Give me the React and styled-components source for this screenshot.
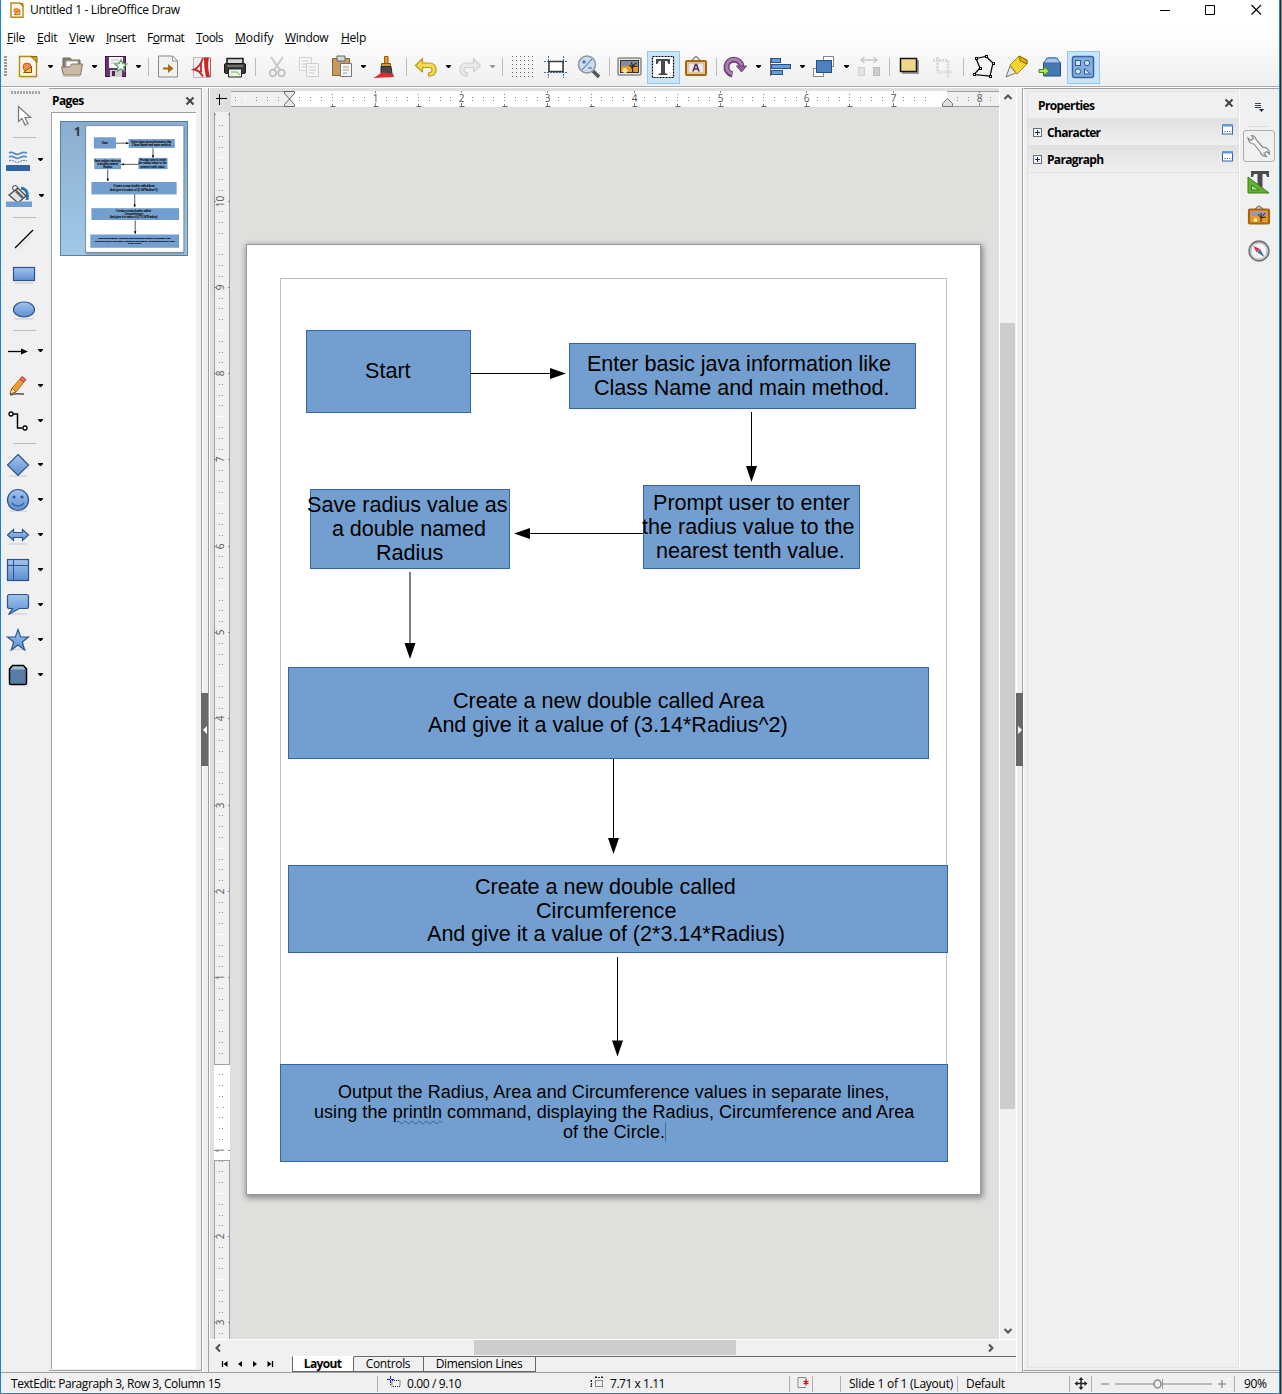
import React, { useLayoutEffect, useRef } from 'react';
import styled, { createGlobalStyle, css } from 'styled-components';

const Global = createGlobalStyle`
  * { box-sizing: border-box; }
  body { margin: 0; background: #fff; font-family: "Open Sans", "Noto Sans", sans-serif; font-size: 12px; color: #000; }
`;

/* ---------- text ---------- */

const Text = styled.span`
  display: inline-block;
  flex: none;
  white-space: pre;
  font-size: ${(p) => p.$size || 12}px;
  font-weight: ${(p) => (p.$bold ? 700 : 400)};
  line-height: ${(p) => p.$lh || 16}px;
  margin-left: ${(p) => p.$ml || 0}px;
`;

/* Tracks its characters so that the label fills a given width. */
function Label({ w, children, ...rest }) {
  const ref = useRef(null);
  useLayoutEffect(() => {
    const el = ref.current;
    el.style.letterSpacing = '0px';
    el.style.letterSpacing = `${((w - el.offsetWidth) / el.textContent.length).toFixed(3)}px`;
  }, [w]);
  return <Text ref={ref} {...rest}>{children}</Text>;
}

/* ---------- window frame ---------- */

const Frame = styled.div`
  display: flex;
  width: 1282px;
  height: 1394px;
  overflow: hidden;
`;
const Window = styled.div`
  display: flex;
  flex-direction: column;
  width: 1280px;
  height: 1394px;
  border-left: 1px solid #1883d7;
  border-right: 1px solid #1883d7;
  border-bottom: 1px solid #1883d7;
  background: #f0f0f0;
`;
const Edge = styled.div`
  width: 2px;
  background: linear-gradient(90deg, #26282c 50%, #8b8b8b 50%);
`;
const Header = styled.header`
  height: 88px;
  flex: none;
  background: linear-gradient(#fff 0, #fff 20px, #fdfdfd 40px, #efefef 86px);
  border-bottom: 1px solid #fff;
  box-shadow: inset 0 -1px 0 #a8a8a8;
`;
const TitleBar = styled.div`
  display: flex;
  height: 20px;
  padding-left: 8px;
  align-items: center;
`;
const WindowButtons = styled.div`
  display: flex;
  gap: 35px;
  margin-left: auto;
  padding-right: 17px;
`;
const MenuBar = styled.nav`
  display: flex;
  height: 28px;
  padding: 10px 0 0 6px;
`;
const ToolRow = styled.div`
  display: flex;
  align-items: center;
  height: 38px;
`;
const Slot = styled.div`
  display: flex;
  flex: none;
  align-items: center;
  justify-content: center;
  width: ${(p) => p.$w}px;
  height: ${(p) => p.$h || 33}px;
  margin-left: ${(p) => p.$gap}px;
  ${(p) => p.$on && css`background: #cce4f7; border: 1px solid #90c8f6;`}
`;
const Divider = styled.i`
  width: 1px;
  height: 18px;
  background: #bcbcbc;
`;
const Drawing = styled.svg`
  display: block;
  flex: none;
  overflow: visible;
`;
const I = ({ children, s = 24 }) => (
  <Drawing width={s} height={s} viewBox={`${-s / 2} ${-s / 2} ${s} ${s}`} fill="none">{children}</Drawing>
);
const Caret = ({ c = '#000' }) => <I s={8}><path d="M-2 -2h5v1l-2 2h-1l-2-2z" fill={c} /></I>;

/* ---------- toolbar icons ---------- */

const New = () => <I><path d="M-8.5 -10.5h13l4 4v16h-17z" fill="#fdf7ec" stroke="#b08c1c" strokeWidth="1.4" /><path d="M3 -10.5h6v6z" fill="#c9a227" stroke="#8a6c0c" /><path d="M-7 10.8h15" stroke="#ccc" /><circle cx="-1" cy="0" r="4" fill="#f28b4b" stroke="#b5602a" /><path d="M-4.5 5.5l8-6v6z" fill="#f4c94e" stroke="#8a4a12" /></I>;
const Folder = () => <I><path d="M-9 4v-13h7l2 2h8v11z" fill="#8b7d6c" stroke="#776a5a" /><path d="M-6 -6h12v6h-12z" fill="#fff" stroke="#aaa" /><path d="M-10.5 0h8l2-3h11l-2 11h-17z" fill="#cbbba5" stroke="#84755f" /><path d="M-9 9.5h17" stroke="#ccc" /></I>;
const Save = () => <I><rect x="-10.5" y="-10.5" width="20" height="20" fill="#67356f" stroke="#40194a" /><path d="M-7 -10h14v11h-14z" fill="#f6f6f6" /><path d="M-5 -7h8M-5 -4h8" stroke="#bbb" /><path d="M-6 3h12v7h-12z" fill="#cfcfcf" /><path d="M-4 4h3v5h-3z" fill="#453049" /><path d="M5 -7l1.8 3.6 4 .4-3 3 .8 4-3.6-2-3.6 2 .6-4-3-3 4-.4z" fill="#fff" stroke="#55a868" strokeWidth="1.3" /></I>;
const Export = () => <I><path d="M-9.5 -11h14l5 5v16h-19z" fill="#f1f1f1" stroke="#888" /><path d="M4.500 -11v5h5z" fill="#fff" stroke="#999" /><path d="M-5 1.5h6" stroke="#a76c0e" strokeWidth="2" /><path d="M0 -3l5.5 4.5-5.5 4.5z" fill="#a76c0e" /></I>;
const Pdf = () => <I><path d="M-8.5 -9.5h17v20h-17z" fill="#efefef" stroke="#bbb" /><path d="M8.500 -9v19" stroke="#d05055" /><path d="M2 -9.500h5c-1.500 6-1 13 1 19.500h-4c-1.500-7-2-13-2-19.500z" fill="#c9252b" /><path d="M1 -9C-1 -3 -4 1 -8 2.500C-5 3 -1 6 1 9.500M-1 -4v9" stroke="#c9252b" strokeWidth="1.800" /></I>;
const Print = () => <I><path d="M-8 -8.5h16v6h-16z" fill="#d5d5d5" stroke="#222" strokeWidth="1.6" /><rect x="-10.5" y="-3.5" width="21" height="10" rx="1.5" fill="#383838" stroke="#181818" /><path d="M-8 -1h16" stroke="#a9a9a9" /><path d="M-6.5 2h13v8h-13z" fill="#eaf6e6" stroke="#222" /><path d="M-4 5h6l3 3" stroke="#71b064" /></I>;
const Cut = () => <I><path d="M-6 -10L3 3M6 -10L-3 3" stroke="#cacaca" strokeWidth="2" /><circle cx="-4" cy="6" r="3.3" stroke="#bcbcbc" strokeWidth="1.7" /><circle cx="4.5" cy="6" r="3.3" stroke="#bcbcbc" strokeWidth="1.7" /></I>;
const Copy = () => <I><path d="M-9.5 -9.5h12v13h-12z" fill="#f6f6f6" stroke="#d2d2d2" /><path d="M-7 -6h7M-7 -3h7M-7 0h5" stroke="#ccc" /><path d="M-2.5 -3.5h12v13h-12z" fill="#f6f6f6" stroke="#cdcdcd" /><path d="M0 0h7M0 3h7M0 6h5" stroke="#ccc" /></I>;
const Paste = () => <I><path d="M-8.5 -8.5h17v17h-17z" fill="#c69a63" stroke="#8d642c" /><path d="M-4 -11h8v5h-8z" fill="#d8d8d8" stroke="#666" /><path d="M-.5 -3.5h11v13h-11z" fill="#f7f7f5" stroke="#777" /><path d="M2 0h6M2 3h6M2 6h4" stroke="#9a9a9a" /></I>;
const Brush = () => <I><path d="M-1.5 -10.5h3.5v7h-3.5z" fill="#e39a3b" stroke="#9b5c12" /><path d="M-4.5 -3.5h9v3h-9z" fill="#d79539" stroke="#8a5716" /><path d="M-5 -.5h10l1 7h-11z" fill="#48484c" stroke="#2b2b2b" /><path d="M-13 11c4-1 6-4.500 9-5.500l11 1 1 3.500z" fill="#dd2a33" /></I>;
const Undo = ({ f = '#f4dc54', s = '#b79a12', flip }) => <I><path transform={flip ? 'scale(-1,1)' : undefined} d="M-10.5 -1.5l7-7v4.500h7c8 0 9 12.500 1 13h-2v-3c4 0 5 -5.500 1-5.500h-7v4.500z" fill={f} stroke={s} strokeWidth="1.2" strokeLinejoin="round" /></I>;
const GridDots = () => <I>{[-11, -7, -3, 1, 5, 9].map((y) => <path key={y} d={`M-10 ${y + 0.5}h21`} stroke="#666" strokeDasharray="1 3" />)}</I>;
const Guides = () => <I><path d="M-7.5 -11v22M7.5 -11v22M-12 -5.5h24M-12 5.5h24" stroke="#3b6f9e" strokeDasharray="2 1" /><rect x="-7" y="-5.5" width="14" height="10" fill="#fff" stroke="#3c3c3c" strokeWidth="1.5" /></I>;
const Zoom = () => <I><path d="M4 4l6 6" stroke="#555" strokeWidth="3.5" /><circle cx="-2" cy="-2.5" r="8.5" fill="#cbdcf0" stroke="#8d9297" strokeWidth="1.5" /><path d="M-7 3L3 -8M-7 -5h4M-5 -7v4M-1 1h4" stroke="#3b669c" /></I>;
const Picture = ({ frame = '#8b8b85' }) => <><rect x="-11" y="-9" width="23" height="17" rx="1" fill="#e7e7e2" stroke={frame} strokeWidth="1.5" /><rect x="-8.500" y="-6.5" width="18" height="12" fill="#e8982c" stroke="#333" /><path d="M-8 -6h17v5c-6-1-10 1-17 0z" fill="#7d8ea0" /><circle cx="-4" cy="3.500" r="2.5" fill="#ffe88d" /><path d="M3.500 5c1-4-1-5-3-7M3.500 1c0-3 2-4 4-5M3.500 0l-1-5M3.500 0l5-1" stroke="#37200f" strokeWidth="1.2" /></>;
const TextTool = () => <I><rect x="-10.5" y="-10.5" width="21" height="21" fill="#fff" stroke="#000" strokeDasharray="2 1" strokeWidth="1.2" /><path d="M-7 -8h14v5h-1.500l-1.500-3h-2v12l2.500 1v1h-9v-1l2.500-1v-12h-2l-1.500 3h-1.500z" fill="#464b4e" /></I>;
const Fontwork = () => <I><path d="M-4 -7l4-3.5 4 3.5" stroke="#888" strokeWidth="1.4" /><rect x="-10" y="-6" width="20" height="14" rx="1" fill="#eee8f2" stroke="#a4660b" strokeWidth="2" /><rect x="-8" y="-4" width="16" height="10" stroke="#d7a24c" /><path d="M-3 4.500l2.500-7h1l2.500 7M-1.800 2h3.600" stroke="#54375e" strokeWidth="1.7" /></I>;
const Rotate = () => <I><path d="M-2.5 7.500A7.5 7.5 0 1 1 6.5 0" stroke="#6e3f75" strokeWidth="6" /><path d="M-2.5 7A7.5 7.5 0 1 1 6.5 0" stroke="#a880ae" strokeWidth="3" /><path d="M1.5 -1h10l-5 6z" fill="#8f6096" stroke="#6e3f75" /></I>;
const bar = { fill: '#6c9bd6', stroke: '#24508c' };
const Align = () => <I><path d="M-9.5 -9v18" stroke="#666" /><rect x="-8.5" y="-8.5" width="9" height="4" {...bar} /><rect x="-8.5" y="-2.5" width="19" height="4" {...bar} /><rect x="-8.5" y="3.5" width="11" height="4" {...bar} /></I>;
const Arrange = () => <I><rect x="-.5" y="-10.5" width="10" height="10" fill="#fff" stroke="#888" /><rect x="-10.5" y="1.5" width="10" height="8" fill="#fff" stroke="#888" /><rect x="-7.5" y="-6.5" width="15" height="12" fill="#4c80bf" stroke="#244f87" /></I>;
const Distribute = () => <I><path d="M-7 -7h14M-4.5 -10l-3.5 3 3.5 3M4.5 -10l3.5 3-3.5 3" stroke="#c8c8c8" strokeWidth="1.5" /><rect x="-10.5" y=".5" width="6" height="8" fill="#e3e3e3" stroke="#cfcfcf" /><rect x="4.5" y=".5" width="6" height="8" fill="#ccc" stroke="#bdbdbd" /></I>;
const Shadow = () => <I><rect x="-7" y="-7" width="17" height="14" fill="#9a9a9a" /><rect x="-8.5" y="-8.5" width="16" height="13" fill="#f0d68c" stroke="#141414" strokeWidth="1.5" /></I>;
const Crop = () => <I><path d="M-5.500 -10v15h15M-10 -6.500h15v17" stroke="#dadada" strokeWidth="3" strokeDasharray="2 1" /></I>;
const Points = () => <I><path d="M-7 -8.5l10-2 7 6.500-3 13-16-1.500 6-6.500z" stroke="#000" strokeWidth="1.2" />{[[-7, -9], [3, -11], [10, -4], [7, 9], [-9, 7], [-3, 1]].map(([x, y]) => <rect key={x} x={x - 0.5} y={y - 0.5} width="2" height="2" fill="#fff" stroke="#000" />)}</I>;
const Glue = () => <I><path d="M-11 10l4-11 6 7z" fill="#e8e8e4" stroke="#777" /><path d="M-7 -2l9-9 8 4v4l-10 10z" fill="#f4d62f" stroke="#a98b0b" /><path d="M2 -11l8 4v4l-7-3z" fill="#dca915" stroke="#8f7009" /></I>;
const Extrude = () => <I><path d="M-6.5 -4l4-5h9l4 5v13h-17z" fill="#4678b4" stroke="#234e82" /><path d="M-6.500 -4l4-5h9l4 5z" fill="#a9c6e8" stroke="#3b6ca8" /><path d="M-11 2.5h5v-3l5 4.500-5 4.500v-3h-5z" fill="#b5e853" stroke="#3f8b13" /></I>;
const Shapes = () => <I><rect x="-10.5" y="-10.5" width="21" height="21" rx="2" fill="#85ade0" stroke="#3564a0" strokeWidth="1.5" /><g fill="#d3e3f6" stroke="#2b5793"><rect x="-7.5" y="-6.5" width="5" height="5" /><circle cx="4" cy="-4" r="2.7" /><circle cx="-5" cy="4.5" r="2.7" /><path d="M1.5 1.5v5.5h6z" /></g></I>;
const Grip = () => <I>{[-10, -7, -4, -1, 2, 5, 8].map((y) => <path key={y} d={`M-1 ${y}h3`} stroke="#999" strokeWidth="2" />)}</I>;

const TOOLS = [
  [5, Grip, 6], [28, New], [50, 'v'], [72, Folder], [94, 'v'], [116, Save], [138, 'v'], [148, '|'],
  [168, Export], [202, Pdf], [235, Print], [255, '|'], [277, Cut], [309, Copy], [341, Paste], [363, 'v'], [386, Brush], [406, '|'],
  [426, Undo], [448, 'v'], [470, () => <Undo flip f="#e9e9e9" s="#cfcfcf" />], [492, 'x'], [502, '|'],
  [522, GridDots], [556, Guides], [589, Zoom], [609, '|'],
  [629, () => <I><Picture /></I>], [663, TextTool, 33, true], [696, Fontwork], [716, '|'],
  [735, Rotate], [758, 'v'], [780, Align], [802, 'v'], [824, Arrange], [846, 'v'], [869, Distribute], [889, '|'],
  [909, Shadow], [943, Crop], [963, '|'], [983, Points], [1017, Glue], [1050, Extrude], [1083, Shapes, 33, true],
];

function Tools() {
  let end = 1;
  return (
    <ToolRow>
      {TOOLS.map(([at, Icon, width, on]) => {
        const w = width || (typeof Icon === 'string' ? 8 : 24);
        const gap = at - w / 2 - end;
        end = at + w / 2;
        return (
          <Slot key={at} $w={w} $gap={gap} $on={on}>
            {Icon === '|' ? <Divider /> : Icon === 'v' ? <Caret /> : Icon === 'x' ? <Caret c="#999" /> : <Icon />}
          </Slot>
        );
      })}
    </ToolRow>
  );
}

const MENUS = [['File', 0, 6, 18], ['Edit', 0, 12, 20], ['View', 0, 12, 25], ['Insert', 0, 12, 29], ['Format', 1, 12, 37], ['Tools', 0, 12, 27], ['Modify', 0, 12, 38], ['Window', 0, 12, 43], ['Help', 0, 13, 25]];

const MenuItem = styled.div`
  display: flex;
  flex: none;
  width: ${(p) => p.$w}px;
  margin-left: ${(p) => p.$gap}px;
`;

/* ---------- body ---------- */

const Body = styled.div`
  display: flex;
  height: 1284px;
  flex: none;
`;

const ToolBox = styled.aside`
  display: flex;
  flex-direction: column;
  width: 48px;
  flex: none;
`;
const BoxRow = styled.div`
  display: flex;
  flex: none;
  align-items: center;
  height: ${(p) => p.$h}px;
  margin-top: ${(p) => p.$gap}px;
  padding-left: ${(p) => p.$x}px;
  gap: 6px;
`;
const BoxRule = styled.i`
  width: 23px;
  height: 1px;
  background: #bdbdbd;
`;

const Blue = () => (
  <defs>
    <linearGradient id="blue" x1="0" y1="0" x2="0" y2="1">
      <stop offset="0" stopColor="#a5c4ec" />
      <stop offset="1" stopColor="#5c8fd0" />
    </linearGradient>
  </defs>
);
const shape = { fill: 'url(#blue)', stroke: '#2a5491', strokeWidth: 1.2 };
const Base = ({ y = 11 }) => <path d={`M-9 ${y}h18`} stroke="#d6d6d6" strokeWidth="1.5" />;
const DotGrip = () => <I>{[-14, -11, -8, -5, -2, 1, 4, 7, 10, 13].map((x) => <rect key={x} x={x} y="-1" width="2" height="3" fill="#a6a6a6" />)}</I>;
const Pointer = () => <I><path d="M-5.5 -10.5v15l3.5-3 3 6.5 3-1.5-3-6h5.5z" fill="#fff" stroke="#777" strokeWidth="1.2" /></I>;
const LineColor = () => <I><path d="M-9 -7c4-3 6 3 10 1s5-2 8-1M-9 -3c4-3 6 3 10 1s5-2 8-1" stroke="#5b8ac4" strokeWidth="1.7" /><path d="M-9 1c4-3 6 3 10 1s5-2 8-1" stroke="#3f73b3" strokeDasharray="2 1" /><path d="M-12 5h24v6h-24z" fill="#2f62a6" /></I>;
const Fill = () => <I><path d="M2 -8c7 1 7 8 6 12" stroke="#2b78b5" strokeWidth="3" /><path d="M-10 -1l9-7 8 8-8 7z" fill="#e2e2e2" stroke="#444" strokeWidth="1.2" /><path d="M-3 -5l7 7" stroke="#666" strokeWidth="2.500" /><circle cx="-4" cy="-8" r="2.5" stroke="#444" /><path d="M-13 5.5h26v5.5h-26z" fill="#729fcf" /></I>;
const Line = () => <I><path d="M-7 11l16-16" stroke="#ddd" /><path d="M-9 9l18-18" stroke="#000" strokeWidth="1.2" /></I>;
const Rect = () => <I><Blue /><rect x="-10.5" y="-6.5" width="21" height="13" {...shape} /><Base y={9} /></I>;
const Ellipse = () => <I><ellipse cx="0" cy="-.5" rx="10.5" ry="7.5" {...shape} /><Base y={9} /></I>;
const Arrow = () => <I><path d="M-10 .5h14" stroke="#000" strokeWidth="1.3" /><path d="M3 -2.5l7 3-7 3z" fill="#000" /></I>;
const Pencil = () => <I><path d="M-8 9c6-2 10-1 14-1" stroke="#555" strokeWidth="1.500" /><path d="M-8 8l2-6 8-9 4 3-8 10z" fill="#ee9b33" stroke="#b5701a" /><path d="M-8 8l2-6 4 4z" fill="#f3dfb8" stroke="#96680d" /><path d="M2 -7l2-2.500 4 3-2 2.500z" fill="#e97373" stroke="#b33" /></I>;
const Connector = () => <I><path d="M-5 -7h4.5v14h5" stroke="#000" strokeWidth="1.500" /><circle cx="-7" cy="-7" r="2" fill="#fff" stroke="#000" strokeWidth="1.300" /><circle cx="7" cy="7" r="2" fill="#fff" stroke="#000" strokeWidth="1.300" /></I>;
const Diamond = () => <I><Base /><path d="M0 -10.5l10.5 10.5-10.5 10.5-10.5-10.5z" {...shape} /></I>;
const Smile = () => <I><Base /><circle r="10.5" {...shape} /><circle cx="-4" cy="-3" r="1.5" fill="#2a5491" /><circle cx="4" cy="-3" r="1.5" fill="#2a5491" /><path d="M-6 3c3 4 9 4 12 0" stroke="#2a5491" strokeWidth="1.2" /></I>;
const DoubleArrow = () => <I><Base y={9} /><path d="M-10.5 0l6-5.5v3h9v-3l6 5.5-6 5.5v-3h-9v3z" {...shape} /></I>;
const Flow = () => <I><rect x="-10.5" y="-10.5" width="21" height="21" {...shape} /><path d="M-4.500 -10v20M-10 -4.5h20" stroke="#2a5491" /></I>;
const Callout = () => <I><Base y={9} /><path d="M-8.5 -10.5h17q2 0 2 2v10q0 2-2 2h-7l-11 6 4-6h-3q-2 0-2-2v-10q0-2 2-2z" {...shape} /></I>;
const Star = () => <I><Base y={9.5} /><path d="M0 -10.5l2.6 7.5h7.9l-6.2 5 2.3 8-6.6-5-6.6 5 2.3-8-6.2-5h7.9z" {...shape} /></I>;
const Cube = () => <I><path d="M-8.5 -6l3-3.5h11l3 3.5v14q0 1.500-1.500 1.500h-14q-1.500 0-1.500-1.500z" fill="#587ca4" stroke="#000" strokeWidth="1.500" /><path d="M-7.500 -5.500l2.500-3h10l2.500 3z" fill="#a3bad1" /></I>;

const BOX = [
  [92, DotGrip, 12, false, 4], [117, Pointer, 11], [137, null], [160, LineColor, 5, true], [196, Fill, 6, true], [217, null],
  [239, Line, 11], [274, Rect, 11], [310, Ellipse, 11], [330, null],
  [351, Arrow, 5, true], [386, Pencil, 5, true], [421, Connector, 5, true], [443, null],
  [464.5, Diamond, 5, true], [500, Smile, 5, true], [535, DoubleArrow, 5, true], [570, Flow, 5, true],
  [605, Callout, 5, true], [640, Star, 5, true], [675, Cube, 5, true],
];

function Shelf() {
  let end = 88;
  return (
    <ToolBox>
      {BOX.map(([at, Icon, x, caret, height]) => {
        const h = height || (Icon ? 24 : 2);
        const gap = at - h / 2 - end;
        end = at + h / 2;
        return (
          <BoxRow key={at} $h={h} $gap={gap} $x={Icon ? x : 12}>
            {Icon ? <Icon /> : <BoxRule />}
            {caret && <Caret />}
          </BoxRow>
        );
      })}
    </ToolBox>
  );
}

/* ---------- diagram ---------- */

const Misspelt = styled.span`
  text-decoration: underline wavy #2c5f97 1px;
  text-underline-offset: 2px;
`;

const NODES = [
  { x: 306, y: 330, w: 165, h: 83, top: 359, lines: [['Start', 365, 46]] },
  { x: 569, y: 343, w: 347, h: 66, top: 352, lines: [['Enter basic java information like', 587, 304], ['Class Name and main method.', 594, 295]] },
  { x: 643, y: 485, w: 217, h: 84, top: 491, lines: [['Prompt user to enter', 653, 197], ['the radius value to the', 642, 212], ['nearest tenth value.', 656, 189]] },
  { x: 310, y: 489, w: 200, h: 80, top: 493, lines: [['Save radius value as', 307, 200], ['a double named', 332, 154], ['Radius', 376, 67]] },
  { x: 288, y: 667, w: 641, h: 92, top: 689, lines: [['Create a new double called Area', 453, 311], ['And give it a value of (3.14*Radius^2)', 428, 360]] },
  { x: 288, y: 865, w: 660, h: 88, top: 875, lh: 23.5, lines: [['Create a new double called', 475, 261], ['Circumference', 536, 140], ['And give it a value of (2*3.14*Radius)', 427, 358]] },
  { x: 280, y: 1064, w: 668, h: 98, top: 1082, lh: 20, size: 18, lines: [['Output the Radius, Area and Circumference values in separate lines,', 338, 551], [<>using the <Misspelt>println</Misspelt> command, displaying the Radius, Circumference and Area</>, 314, 600], ['of the Circle.', 563, 102]] },
];

const Sheet = styled.div`
  position: absolute;
  left: ${(p) => p.$x}px;
  top: ${(p) => p.$y}px;
  width: 735px;
  height: 951px;
  border: 1px solid #9a9a9a;
  background: #fff;
  box-shadow: 1px 2px 6px 1px rgba(0, 0, 0, 0.4);
  ${(p) => p.$scale && css`
    transform: scale(${p.$scale});
    transform-origin: 0 0;
    box-shadow: 0 0 0 6px #7d8fa0, 6px 12px 16px 8px rgba(0, 0, 0, 0.35);
    -webkit-text-stroke: 1.2px #000;
  `}
`;
const Margins = styled.div`
  position: absolute;
  left: 33px;
  top: 33px;
  width: 667px;
  height: 883px;
  border: 1px solid #c0c0c0;
`;
const NodeBox = styled.div`
  position: absolute;
  left: ${(p) => p.$n.x - 247}px;
  top: ${(p) => p.$n.y - 245}px;
  width: ${(p) => p.$n.w}px;
  height: ${(p) => p.$n.h}px;
  padding-top: ${(p) => p.$n.top - p.$n.y - 1}px;
  display: flex;
  flex-direction: column;
  align-items: flex-start;
  background: #729fcf;
  border: 1px solid #3465a4;
  font-family: "Liberation Sans", Arial, sans-serif;
`;
const TypingCaret = styled.i`
  position: absolute;
  left: 384px;
  top: 57px;
  width: 1px;
  height: 20px;
  background: #3c6ea8;
`;
const Links = styled.svg`
  position: absolute;
  left: 0;
  top: 0;
`;

function Diagram(props) {
  return (
    <Sheet {...props}>
      {!props.$scale && <Margins />}
      {NODES.map((n) => (
        <NodeBox key={n.top} $n={n}>
          {n.lines.map(([t, x, w]) => (
            <Label key={x} w={w} $ml={x - n.x - 1} $size={n.size || 21.6} $lh={n.lh || 24}>{t}</Label>
          ))}
          {n.size && !props.$scale && <TypingCaret />}
        </NodeBox>
      ))}
      <Links width="733" height="949" viewBox="247 245 733 949" strokeWidth={props.$scale ? 5 : 1}>
        <path d="M471 373.5h80M751.5 412v56M643 533.5h-114M410 572v73M613.5 759v81M617.5 957v85" stroke="#000" fill="none" />
        <path d="M566 373.5l-16-5.5v11zM751.5 482l-5.5-16h11zM514 533.5l16-5.5v11zM410 659l-5.5-16h11zM613.5 854l-5.5-16h11zM617.5 1056.5l-5.5-16h11z" fill="#000" stroke={props.$scale ? '#000' : 'none'} />
      </Links>
    </Sheet>
  );
}

/* ---------- pages panel ---------- */

const PagesPanel = styled.section`
  display: flex;
  flex-direction: column;
  width: 153px;
  height: 1283px;
  flex: none;
  border-top: 1px solid #a0a0a0;
  border-right: 1px solid #a0a0a0;
  border-bottom: 1px solid #a0a0a0;
`;
const PagesHead = styled.div`
  display: flex;
  align-items: center;
  justify-content: space-between;
  height: 23px;
  padding: 0 6px 0 3px;
`;
const PageList = styled.div`
  width: 145px;
  height: 1257px;
  margin-left: 2px;
  padding: 8px 0 0 8px;
  background: #fff;
  border-left: 1px solid #a0a0a0;
  border-top: 1px solid #a0a0a0;
`;
const Thumb = styled.div`
  position: relative;
  width: 128px;
  height: 135px;
  padding: 1px 0 0 13px;
  color: #333;
  background: linear-gradient(#8baed0, #a3c8e6);
  border: 1px solid #55819f;
`;

const Splitter = styled.div`
  display: flex;
  align-items: center;
  position: relative;
  width: ${(p) => p.$w}px;
  flex: none;
  border-left: 1px solid #fff;
  border-right: 1px solid #a0a0a0;
`;
const Handle = styled.button`
  position: absolute;
  left: ${(p) => p.$x}px;
  top: 605px;
  width: 7px;
  height: 73px;
  padding: 0;
  border: 0;
  display: grid;
  place-items: center;
  background: #696969;
`;

/* ---------- editing area ---------- */

const Center = styled.main`
  display: flex;
  flex-direction: column;
  width: 807px;
  flex: none;
`;
const Upper = styled.div`
  display: flex;
  height: 1251px;
`;
const Work = styled.div`
  display: grid;
  grid-template: 20px 1fr / 20px 1fr;
  width: 790px;
  background: #dfdfdd;
  border-left: 1px solid #fff;
  overflow: hidden;
`;
const Canvas = styled.div`
  position: relative;
  overflow: hidden;
`;
const VBar = styled.div`
  display: flex;
  flex-direction: column;
  align-items: center;
  width: 17px;
  border-left: 1px solid #fff;
  padding: 5px 0 4px;
`;
const VThumb = styled.div`
  width: 15px;
  height: 786px;
  margin: 222px 1px auto 0;
  background: #cdcdcd;
`;
const HBar = styled.div`
  display: flex;
  align-items: center;
  height: 17px;
  border-top: 1px solid #fff;
  padding: 0 21px 1px 5px;
`;
const HThumb = styled.div`
  width: 262px;
  height: 15px;
  margin: 0 auto 0 252px;
  background: #cdcdcd;
`;
const TabRow = styled.div`
  display: flex;
  height: 16px;
`;
const TabNav = styled.div`
  display: flex;
  align-items: center;
  width: 83px;
  padding-left: 12px;
  gap: 7px;
`;
const Tab = styled.div`
  display: flex;
  justify-content: center;
  width: ${(p) => p.$w}px;
  height: 16px;
  padding-right: 1px;
  border: 1px solid #696969;
  border-left-width: ${(p) => (p.$on ? 1 : 0)}px;
  border-top-color: ${(p) => (p.$on ? '#fff' : '#696969')};
  background: ${(p) => (p.$on ? '#fff' : '#f0f0f0')};
`;
const TabRest = styled.div`
  flex: 1;
  border-top: 1px solid #696969;
`;
const Chevron = ({ r = 0 }) => <I s={8}><path transform={`rotate(${r})`} d="M-3.5 2L0 -1.5L3.5 2" stroke="#505050" strokeWidth="2" /></I>;

const INCH = 86.3;
const steps = (a, b) => Array.from({ length: b - a + 1 }, (_, i) => a + i);

/* Marks run along the x axis in eighths of an inch from the zero point. */
function HRuler() {
  return (
    <Drawing width="769" height="20" viewBox="230 88 769 20" fontFamily="Open Sans, sans-serif" fontSize="10">
      <rect x="231" y="91" width="768" height="16" fill="#f0f0f0" />
      <path d="M231 91.5h768M231 106.5h768" stroke="#a0a0a0" />
      <rect x="289" y="91" width="658" height="16" fill="#fff" />
      {steps(-5, 65).map((i) => {
        const x = Math.floor(289 + (i * INCH) / 8) + 0.5;
        if (i === 0 || (i > 59 && i < 62)) return null;
        if (i % 8 === 0) return <g key={i}><path d={`M${x} 91v2M${x} 103v3`} stroke="#888" />{i < 62 && <path d={`M${x - 2} 106.5h5`} stroke="#666" />}<text x={x} y="102" fill="#555" textAnchor="middle">{i / 8}</text></g>;
        if (i % 4 === 0) return <g key={i}>{i < 0 ? <path d={`M${x} 95v6`} stroke="#fff" /> : <><path d={`M${x} 94v1M${x} 97v1M${x} 100v1M${x} 104v2`} stroke="#888" /><path d={`M${x - 2} 106.5h5`} stroke="#666" /></>}</g>;
        return <path key={i} d={`M${x} 97v1M${x} 100v1`} stroke="#888" />;
      })}
      <path d="M284.5 91.5h10v2l-10 11v2h10v-2l-10-11z" fill="#e8e8e6" stroke="#666" />
      <path d="M942.5 106.5v-3l5-5 5 5v3z" fill="#e0e0de" stroke="#777" />
    </Drawing>
  );
}

function VRuler() {
  return (
    <Drawing width="20" height="1231" viewBox="210 108 20 1231" fontFamily="Open Sans, sans-serif" fontSize="10">
      <rect x="215" y="112" width="15" height="1227" fill="#f0f0f0" />
      <path d="M214.5 112v1227M229.5 112v1227" stroke="#a0a0a0" />
      <rect x="214" y="1065" width="16" height="96" fill="#fff" />
      <path d="M214 1064.5h16M214 1160.5h16" stroke="#a0a0a0" />
      {steps(-88, 25).map((i) => {
        const y = Math.floor(1064 + (i * INCH) / 8) + 0.5;
        if (i === 0 || y < 114) return null;
        if (i % 8 === 0) return <g key={i}><path d={`M214 ${y}h2M228 ${y}h2`} stroke="#888" />{y > 120 && <text transform={`translate(224 ${y}) rotate(-90)`} fill="#555" textAnchor="middle">{Math.abs(i / 8)}</text>}</g>;
        if (i % 4 === 0) return <path key={i} d={i === 4 ? `M217 ${y}h1M223 ${y}h1` : `M217 ${y}h7`} stroke={i === 4 ? '#888' : '#fff'} />;
        return <path key={i} d={`M219 ${y}h1M222 ${y}h1`} stroke="#888" />;
      })}
    </Drawing>
  );
}

/* ---------- sidebar ---------- */

const Side = styled.aside`
  display: flex;
  flex: 1;
  height: 1283px;
  border-left: 1px solid #fff;
  border-top: 1px solid #a0a0a0;
  border-bottom: 1px solid #a0a0a0;
`;
const Deck = styled.div`
  width: 212px;
  height: 1277px;
  margin: 2px 0 0 3px;
  border: 1px solid #e2e2e2;
  box-shadow: 1px 0 0 #fff;
`;
const DeckHead = styled.div`
  display: flex;
  justify-content: space-between;
  height: 26px;
  padding: 6px 4px 0 10px;
`;
const Section = styled.div`
  display: flex;
  align-items: center;
  height: 27px;
  padding: 2px 5px 0 5px;
  gap: 5px;
  background: linear-gradient(#e0e0e0, #f0f0f0);
`;
const SectionMore = styled.div`
  margin: -7px 0 0 auto;
`;
const DeckRule = styled.div`
  height: 1px;
  background: #e0e0e0;
`;
const SideTabs = styled.div`
  display: flex;
  flex-direction: column;
  align-items: center;
  width: 39px;
  padding-top: 10px;
`;
const SideRule = styled.i`
  width: 21px;
  height: 1px;
  margin: 11px 0 3px;
  background: #ddd;
`;
const SideTab = styled.div`
  display: grid;
  place-items: center;
  width: 32px;
  height: 32px;
  margin-bottom: ${(p) => p.$mb || 0}px;
  border-radius: 3px;
  border: 1px solid ${(p) => (p.$on ? '#aeaeae' : 'transparent')};
`;

const Cross = () => <I s={10}><path d="M-3.5 -3.5l7 7M3.5 -3.5l-7 7" stroke="#444" strokeWidth="2" /></I>;
const Expander = () => <I s={9}><rect x="-4" y="-4" width="8" height="8" fill="#f4f7fb" stroke="#66737f" /><path d="M-2.5 0h5M0 -2.5v5" stroke="#1d2b48" /></I>;
const MoreIcon = () => <I s={11}><rect x="-5" y="-4.5" width="10" height="9" fill="#fff" stroke="#3465a4" /><path d="M-5.5 -4h11" stroke="#5b93dc" strokeWidth="2" /><path d="M-3 2h1M-.5 2h1M2 2h1" stroke="#24508c" /></I>;
const MenuIcon = () => <I s={16}><path d="M-4 -3.5h6M-4 -1.500h6M-4 .5h6" stroke="#37435c" /><path d="M0 2h5l-2.5 3z" fill="#16223d" /></I>;
const Wrench = () => <I><g stroke="#8a8a8a" strokeWidth="1.200" fill="#f6f6f6"><path d="M-7.5 -10.5q4 0 4.5 4l7 8q4-.5 6 3.5l.5 3-3-2.5-2.5 2 2.5 3q-5 0-6.5-5l-6-7.5q-5 0-6-6l3 2.5 2.5-2z" /></g></I>;
const Styles = () => <I><path d="M-8 -11h18v6h-2l-1-3h-3.5v15h-5v-15h-3.5l-1 3h-2z" fill="#4a4d50" /><path d="M-11 -5v16h21z" fill="#62b132" stroke="#3c7f17" /><path d="M-7.5 3v5h8z" fill="#a9df85" stroke="#3c7f17" /></I>;
const Gallery = () => <I><path d="M-4 -7l4-3 4 3" stroke="#777" strokeWidth="1.4" /><rect x="-10" y="-6.5" width="20" height="14" rx="1" fill="#e8982c" stroke="#a4660b" strokeWidth="2.200" /><path d="M-7.500 -4h15v4h-15z" fill="#8ba2ae" /><circle cx="-3.500" cy="4" r="2" fill="#ffe88d" /><path d="M2 6v-4l-3-4M2 2l4-5M2 2v-5M2 2l5-1" stroke="#37200f" /></I>;
const Compass = () => <I><circle r="9.7" fill="#f4f5f7" stroke="#777" strokeWidth="2" /><circle r="7.800" stroke="#c8c8c8" /><path d="M-5.500 -5l6.500 3-3.500 3.500z" fill="#d9333f" /><path d="M5.500 6l-7-4.500 2.500-3.500z" fill="#3a6ea8" /></I>;

/* ---------- status bar ---------- */

const StatusBar = styled.footer`
  display: flex;
  flex: 1;
  align-items: center;
  padding-top: 2px;
  border-top: 1px solid #a0a0a0;
`;
const Cell = styled.div`
  display: flex;
  align-items: center;
  flex: none;
  gap: ${(p) => p.$gap || 0}px;
  width: ${(p) => p.$w}px;
  height: 16px;
  padding-left: ${(p) => p.$pl}px;
  border-right: ${(p) => (p.$last ? 0 : 1)}px solid #b0b0b0;
`;
const Spread = styled.div`
  display: flex;
  flex: none;
  align-items: center;
  width: 197px;
  gap: 6px;
`;
const PosIcon = () => <I s={14}><path d="M-3.5 -8v9M-7 -4.5h8" stroke="#1a1ad0" strokeDasharray="3 1" /><path d="M-2 -3.5h8v6h-8z" stroke="#222" strokeDasharray="1 1" /></I>;
const SizeIcon = () => <I s={14}><path d="M-1.5 -3.5h7v6h-7z" stroke="#222" strokeDasharray="1 1" /><path d="M-5.5 -4v7M-7 -3h3M-7 2h3M-2 -6.5h8M-1 -8v3M5 -8v3" stroke="#222" strokeDasharray="2 1" /></I>;
const DocIcon = () => <I s={14}><path d="M3 -2v-4.500h-8v10h8" stroke="#888" /><path d="M3 -4.500v6M.5 -3l5 3M5.5 -3l-5 3" stroke="#c21a1a" strokeWidth="1.2" /></I>;
const FitIcon = () => <I s={14}><path d="M-5 -.5h10M0 -5.500v10" stroke="#222" strokeWidth="1.5" /><path d="M-6.5 -.5l3-2.5v5zM6.5 -.5l-3-2.5v5zM0 -7l-2.5 3h5zM0 6l-2.5-3h5z" fill="#222" /></I>;
const Slider = () => (
  <Drawing width="126" height="14" viewBox="1100 1377 126 14" fill="none">
    <path d="M1101 1384h8M1218 1384h8M1222 1380v8" stroke="#999" strokeWidth="1.6" />
    <path d="M1115 1384h97" stroke="#a8a8a8" strokeWidth="1.5" />
    <path d="M1162.5 1379v10" stroke="#999" />
    <ellipse cx="1157.5" cy="1384" rx="3.5" ry="4" fill="#f0f0f0" stroke="#888" strokeWidth="1.5" />
  </Drawing>
);

export default function App() {
  return (
    <Frame>
      <Global />
      <Window>
        <Header>
          <TitleBar>
            <Drawing width="16" height="17" viewBox="-10 -12 20 24" fill="none"><path d="M-8.5 -10.5h13l4 4v16h-17z" fill="#fdf7ec" stroke="#b08c1c" strokeWidth="2" /><path d="M3 -10.5h6v6z" fill="#a98414" /><circle cx="-1" cy="0" r="4" fill="#f28b4b" /><path d="M-4 6l8-7v7z" fill="#f4c94e" stroke="#8a4a12" /></Drawing>
            <Label w={150} $ml={5}>Untitled 1 - LibreOffice Draw</Label>
            <WindowButtons>
              <I s={11}><path d="M-4.500 0h10" stroke="#000" /></I>
              <I s={11}><path d="M-5 -5h9v9h-9z" stroke="#000" /></I>
              <I s={11}><path d="M-5 -5.500l9.500 9.500M4.500 -5.500l-9.500 9.500" stroke="#000" strokeWidth="1.1" /></I>
            </WindowButtons>
          </TitleBar>
          <MenuBar>
            {MENUS.map(([name, key, gap, w], i) => (
              <MenuItem key={name} $gap={i ? gap : 0} $w={w}>
                <Label w={w}>{name.slice(0, key)}<u>{name[key]}</u>{name.slice(key + 1)}</Label>
              </MenuItem>
            ))}
          </MenuBar>
          <Tools />
        </Header>

        <Body>
          <Shelf />
          <PagesPanel>
            <PagesHead>
              <Label w={32} $bold>Pages</Label>
              <Cross />
            </PagesHead>
            <PageList>
              <Thumb>
                <Text $lh={16} $bold>1</Text>
                <Diagram $x={25} $y={4} $scale={0.1325} />
              </Thumb>
            </PageList>
          </PagesPanel>
          <Splitter $w={7}>
            <Handle $x={-2}><I s={6}><path d="M2 -4v8l-4-4z" fill="#fff" /></I></Handle>
          </Splitter>

          <Center>
            <Upper>
              <Work>
                <Drawing width="20" height="20" viewBox="210 88 20 20"><path d="M216 98.5h11M219.5 94v11" stroke="#000" /></Drawing>
                <HRuler />
                <VRuler />
                <Canvas>
                  <Diagram $x={16} $y={136} />
                </Canvas>
              </Work>
              <VBar>
                <Chevron />
                <VThumb />
                <Chevron r={180} />
              </VBar>
            </Upper>
            <HBar>
              <Chevron r={-90} />
              <HThumb />
              <Chevron r={90} />
            </HBar>
            <TabRow>
              <TabNav>
                <I s={8}><path d="M-2.5 -3v6" stroke="#000" strokeWidth="1.3" /><path d="M2.5 -3v6l-4-3z" fill="#000" /></I>
                <I s={8}><path d="M2 -3v6l-4-3z" fill="#000" /></I>
                <I s={8}><path d="M-2 -3v6l4-3z" fill="#000" /></I>
                <I s={8}><path d="M2.5 -3v6" stroke="#000" strokeWidth="1.3" /><path d="M-2.5 -3v6l4-3z" fill="#000" /></I>
              </TabNav>
              <Tab $w={62} $on><Label w={37} $lh={14} $bold>Layout</Label></Tab>
              <Tab $w={70}><Label w={44} $lh={14}>Controls</Label></Tab>
              <Tab $w={112}><Label w={87} $lh={14}>Dimension Lines</Label></Tab>
              <TabRest />
            </TabRow>
          </Center>

          <Splitter $w={7}>
            <Handle $x={-1}><I s={6}><path d="M-2 -4v8l4-4z" fill="#fff" /></I></Handle>
          </Splitter>
          <Side>
            <Deck>
              <DeckHead>
                <Label w={56} $bold>Properties</Label>
                <Cross />
              </DeckHead>
              <Section><Expander /><Label w={53} $bold>Character</Label><SectionMore><MoreIcon /></SectionMore></Section>
              <Section><Expander /><Label w={56} $bold>Paragraph</Label><SectionMore><MoreIcon /></SectionMore></Section>
              <DeckRule />
            </Deck>
            <SideTabs>
              <MenuIcon />
              <SideRule />
              <SideTab $on $mb={4}><Wrench /></SideTab>
              <SideTab $mb={2}><Styles /></SideTab>
              <SideTab $mb={3}><Gallery /></SideTab>
              <SideTab><Compass /></SideTab>
            </SideTabs>
          </Side>
        </Body>

        <StatusBar>
          <Cell $w={377} $pl={10}><Label w={210}>TextEdit: Paragraph 3, Row 3, Column 15</Label></Cell>
          <Cell $w={412} $pl={9} $gap={6}>
            <Spread><PosIcon /><Label w={54}>0.00 / 9.10</Label></Spread>
            <SizeIcon /><Label w={55}>7.71 x 1.11</Label>
          </Cell>
          <Cell $w={23} $pl={6}><DocIcon /></Cell>
          <Cell $w={28} $pl={0} />
          <Cell $w={117} $pl={8}><Label w={104}>Slide 1 of 1 (Layout)</Label></Cell>
          <Cell $w={112} $pl={8}><Label w={39}>Default</Label></Cell>
          <Cell $w={22} $pl={4}><FitIcon /></Cell>
          <Cell $w={143} $pl={8}><Slider /></Cell>
          <Cell $w={40} $pl={9} $last><Label w={23}>90%</Label></Cell>
        </StatusBar>
      </Window>
      <Edge />
    </Frame>
  );
}
